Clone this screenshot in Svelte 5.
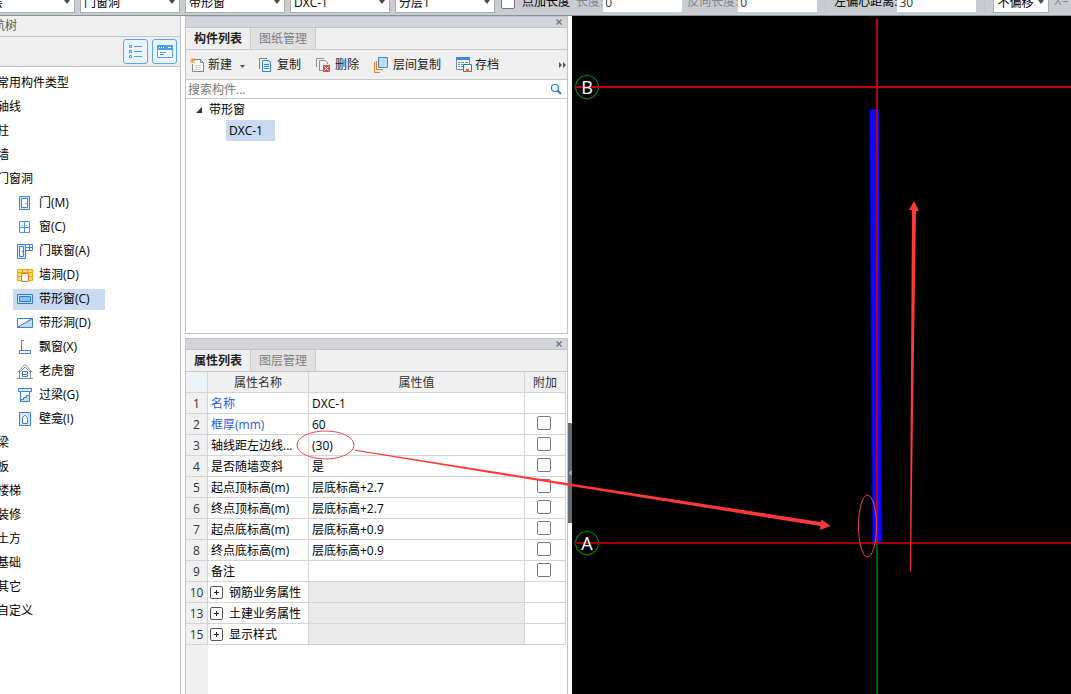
<script>
  const levels = [
    { value: '首层', name: '楼层' },
    { value: '门窗洞', name: '构件分类' },
    { value: '带形窗', name: '构件类型' },
    { value: 'DXC-1', name: '构件' },
    { value: '分层1', name: '分层' }
  ];

  const before = ['常用构件类型', '轴线', '柱', '墙', '门窗洞'];
  const after = ['梁', '板', '楼梯', '装修', '土方', '基础', '其它', '自定义'];
  const children = [
    { icon: 'door', label: '门(M)' },
    { icon: 'window', label: '窗(C)' },
    { icon: 'doorwindow', label: '门联窗(A)' },
    { icon: 'hole', label: '墙洞(D)' },
    { icon: 'strip', label: '带形窗(C)' },
    { icon: 'striphole', label: '带形洞(D)' },
    { icon: 'bay', label: '飘窗(X)' },
    { icon: 'dormer', label: '老虎窗' },
    { icon: 'lintel', label: '过梁(G)' },
    { icon: 'niche', label: '壁龛(I)' }
  ];
  let selected = $state('strip');

  const rows = [
    { n: 1, name: '名称', value: 'DXC-1', blue: true, noCheck: true },
    { n: 2, name: '框厚(mm)', value: '60', blue: true },
    { n: 3, name: '轴线距左边线...', value: '(30)' },
    { n: 4, name: '是否随墙变斜', value: '是' },
    { n: 5, name: '起点顶标高(m)', value: '层底标高+2.7' },
    { n: 6, name: '终点顶标高(m)', value: '层底标高+2.7' },
    { n: 7, name: '起点底标高(m)', value: '层底标高+0.9' },
    { n: 8, name: '终点底标高(m)', value: '层底标高+0.9' },
    { n: 9, name: '备注', value: '' },
    { n: 10, name: '钢筋业务属性', group: true },
    { n: 13, name: '土建业务属性', group: true },
    { n: 15, name: '显示样式', group: true }
  ];
</script>

{#snippet combo(value, name, narrow)}
  <span class="combo" class:narrow>
    <select aria-label={name}><option>{value}</option></select>
    <svg width="6" height="4" viewBox="0 0 6 4" aria-hidden="true"><path d="M0 0h6L3 4z" fill="#4a4a4a" /></svg>
  </span>
{/snippet}

{#snippet treeIcon(kind)}
  <svg class="icon" width="16" height="15" viewBox="0 1 16 15" fill="none" stroke="#3c82d4" aria-hidden="true">
    {#if kind === 'door'}
      <path d="M2.5 1.5h10v13h-10z" fill="#d9e8f8" /><path d="M4.500 3.500h6v9h-6z" fill="#fff" /><path d="M9 8v1" />
    {:else if kind === 'window'}
      <path d="M2.500 2.500h10v11h-10zM7.500 2.500v11M2.500 8.500h10M5.500 6v1M9.500 6v1" stroke="#4c92dc" fill="#f5faff" />
    {:else if kind === 'doorwindow'}
      <path d="M.5 1.500h8v14h-8z" fill="#d9e8f8" /><path d="M2.500 3.500h4v10h-4z" fill="#eaf3fc" /><path d="M8.500 1.500h7v6h-7zM12.500 1.500v6M8.500 4.500h7M5.500 8v1" />
    {:else if kind === 'hole'}
      <path d="M.5 2.500h15v11H.5z" fill="#ffd96b" stroke="#f5a800" /><path d="M0 5.500h16M0 9.500h4M12 9.500h4M5.500 2v3M10.500 2v3" stroke="#f5a800" /><path d="M4.500 6.500h7v8h-7z" fill="#fff" stroke="#e87424" />
    {:else if kind === 'strip'}
      <path d="M.5 3.500h15v9H.5z" fill="#c3ddf5" stroke="#2d7fd0" /><path d="M2.500 5.500h11v5h-11z" fill="#91bfea" stroke="#2d7fd0" />
    {:else if kind === 'striphole'}
      <path d="M.5 12.500v-9h15z" fill="#fff" /><path d="M.5 12.500l15-9v9z" fill="#c5dcf3" />
    {:else if kind === 'bay'}
      <path d="M7 1.500H4.500v9M2.500 11.500h11v3h-11z" /><path d="M4.500 10v1" />
    {:else if kind === 'dormer'}
      <path d="M.5 9.500L8 1.500l7.500 8M2.500 8v7.500M13.500 8v7.500M0 15.500h16M3 9l5-5 5 5" stroke="#838d95" /><path d="M5.500 8.500h5v5h-5zM5.500 11.500h5" />
    {:else if kind === 'lintel'}
      <path d="M1.500 1.500h13v3h-13z" fill="#d9e8f8" /><path d="M3.500 4.500h9v10h-9z" fill="#fff" /><path d="M3.500 14.500v-2h3v-2h3v-2h3v6z" fill="#c5dcf3" />
    {:else}
      <path d="M2.500 1.500h11v13h-11z" fill="#d9e8f8" /><path d="M5.500 12.500v-6l2-2h1l2 2v6z" fill="#fff" />
    {/if}
  </svg>
{/snippet}

{#snippet closeButton()}
  <button class="close" aria-label="关闭">
    <svg width="6" height="6" viewBox="0 0 6 6" aria-hidden="true"><path d="M.5.5l5 5M5.500.5l-5 5" stroke="#6d7077" stroke-width="1.200" /></svg>
  </button>
{/snippet}

<div class="app">
  <header class="optionbar">
    {#each levels as l}
      {@render combo(l.value, l.name, false)}
    {/each}
    <label class="tick"><input type="checkbox" />点加长度</label>
    <label class="field dim">长度:<input type="text" value="0" /></label>
    <label class="field dim">反向长度:<input type="text" value="0" /></label>
    <span class="rule"></span>
    <label class="field">左偏心距离:<input type="text" value="30" /></label>
    <span class="rule"></span>
    {@render combo('不偏移', '偏移方式', true)}
    <span class="coord">X=</span>
  </header>

  <main class="work">
    <aside class="nav">
      <h2>导航树</h2>
      <div class="views">
        <button aria-label="列表视图">
          <svg width="14" height="14" viewBox="0 0 14 14" fill="none" stroke="#4a9ff0" aria-hidden="true"><path d="M.5.5h2v2h-2zM.5 5.500h2v2h-2zM.5 10.500h2v2h-2zM5 1.500h8M5 6.500h8M5 11.500h8" /></svg>
        </button>
        <button aria-label="面板视图">
          <svg width="16" height="14" viewBox="0 0 16 14" aria-hidden="true"><path d="M.5.5h15v12H.5z" fill="#fff" stroke="#4a9ff0" /><path d="M0 0h16v5H0z" fill="#4a9ff0" /><path d="M3 7.500h6M3 9.500h4" stroke="#4a9ff0" /><path d="M2 2.500h1M4 2.500h1M6 2.500h1M11 2.500h3" stroke="#fff" /></svg>
        </button>
      </div>
      <ul>
        {#each before as t}<li>{t}</li>{/each}
        {#each children as c}
          <li class="child">
            <button class:selected={selected === c.icon} onclick={() => (selected = c.icon)}>
              {@render treeIcon(c.icon)}{c.label}
            </button>
          </li>
        {/each}
        {#each after as t}<li>{t}</li>{/each}
      </ul>
    </aside>

    <div class="docks">
      <section class="panel">
        <div class="grip">{@render closeButton()}</div>
        <div class="tabs"><button class="active">构件列表</button><button>图纸管理</button></div>
        <div class="tools">
          <button>
            <svg width="16" height="16" viewBox="0 0 16 16" fill="none" aria-hidden="true"><path d="M4.500 2.500h7l3 3v9h-11V7" fill="#f6f6f6" stroke="#7d8992" /><path d="M11.500 2.500v3h3" stroke="#7d8992" /><path d="M5 8.500h7M5 10.500h7M5 12.500h7" stroke="#d3d7da" /><path d="M1 1l5 5M6 1L1 6M3.500 1v5M1 3.500h5" stroke="#f29a2e" stroke-width=".8" /></svg>
            新建
            <svg class="more" width="8" height="16" viewBox="0 0 8 16" aria-hidden="true"><path d="M5 8h5l-2.500 3z" fill="#555" /></svg>
          </button>
          <button>
            <svg width="16" height="16" viewBox="0 0 16 16" fill="none" stroke="#3b82d1" aria-hidden="true"><path d="M1.500 12V1.500H9" stroke="#74838f" /><path d="M4.500 3.500h6l2 2v9h-8z" fill="#e5f0fb" /><path d="M6 7.500h5M6 9.500h5M6 11.500h5" /></svg>
            复制
          </button>
          <button>
            <svg width="16" height="16" viewBox="0 0 16 16" fill="none" stroke="#87949c" aria-hidden="true"><path d="M.5 10V1.500H8M3.500 13v-9.500h6l2 2V7M3 13.500h4" /><path d="M7 8h7v7H7z" fill="#d65052" stroke="none" /><path d="M8.500 9.500l4 4M12.500 9.500l-4 4" stroke="#fff" /></svg>
            删除
          </button>
          <button>
            <svg width="16" height="16" viewBox="0 0 16 16" fill="none" aria-hidden="true"><path d="M.5 5v10.500H6M2.500 4v8.500H9" stroke="#ee7a22" /><path d="M4.500.5h9v10h-9z" fill="#bcdcfb" stroke="#4388d8" /></svg>
            层间复制
          </button>
          <button>
            <svg width="16" height="16" viewBox="0 0 16 16" fill="none" aria-hidden="true"><path d="M.5 1.500h13v11H.5z" fill="#f3f8fd" stroke="#7d8992" /><path d="M0 0h14v3H0z" fill="#4388d8" /><path d="M2 5.500h2M5 5.500h3M9 5.500h3M2 7.500h2M5 7.500h2M2 9.500h2M5 9.500h2" stroke="#4388d8" /><path d="M7.500 7.500h8v7h-8z" fill="#e5f0fb" stroke="#3278c8" /><path d="M9 8h5v2H9z" fill="#fff" /><path d="M10 12h3v3h-3z" fill="#e86a1c" /></svg>
            存档
          </button>
          <button class="overflow" aria-label="更多">
            <svg width="8" height="6" viewBox="0 0 8 6" aria-hidden="true"><path d="M0 0l3 3-3 3zM4 0l3 3-3 3z" fill="#555" /></svg>
          </button>
        </div>
        <div class="search">
          <input type="text" placeholder="搜索构件..." aria-label="搜索构件" />
          <svg width="12" height="12" viewBox="0 0 12 12" fill="none" stroke="#1b84b8" aria-hidden="true"><circle cx="5" cy="5" r="3.500" stroke-width="1.200" /><path d="M7.500 7.500l3.500 3.500" stroke-width="2" /></svg>
        </div>
        <ul class="parts">
          <li>
            <svg width="6" height="6" viewBox="0 0 6 6" aria-hidden="true"><path d="M6 0v6H0z" fill="#333" /></svg>带形窗
          </li>
          <li class="leaf"><span>DXC-1</span></li>
        </ul>
      </section>

      <section class="panel props">
        <div class="grip">{@render closeButton()}</div>
        <div class="tabs"><button class="active">属性列表</button><button>图层管理</button></div>
        <table>
          <colgroup><col class="c-num" /><col class="c-name" /><col /><col class="c-add" /></colgroup>
          <thead>
            <tr><th class="corner"></th><th>属性名称</th><th>属性值</th><th>附加</th></tr>
          </thead>
          <tbody>
            {#each rows as r}
              <tr class:group={r.group}>
                <th scope="row">{r.n}</th>
                <td class="name" class:blue={r.blue}>
                  {#if r.group}
                    <button class="expand" aria-label="展开{r.name}">
                      <svg width="13" height="13" viewBox="0 0 13 13" fill="none" aria-hidden="true"><rect x=".5" y=".5" width="12" height="12" rx="1.500" stroke="#555" /><path d="M4 6.500h5M6.500 4v5" stroke="#222" /></svg>
                    </button>
                  {/if}{r.name}
                </td>
                <td class="val">{r.value ?? ''}</td>
                <td class="add">
                  {#if !r.group && !r.noCheck}<input type="checkbox" aria-label="附加{r.name}" />{/if}
                </td>
              </tr>
            {/each}
          </tbody>
        </table>
        <div class="filler"></div>
      </section>
    </div>

    <div class="splitter">
      <button aria-label="收起面板">
        <svg width="4" height="6" viewBox="0 0 4 6" aria-hidden="true"><path d="M3.500 0v6L.5 3z" fill="#aab2ba" /></svg>
      </button>
    </div>

    <div class="drawing">
      <svg width="100%" height="100%" role="img" aria-label="平面图">
        <g fill="none" stroke="#008000" stroke-width="1.200">
          <path d="M15 59l6 2 4 4 2 6-2 6-4 4-6 2-6-2-4-4-2-6 2-6 4-4z" />
          <path d="M15 515l6 2 4 4 2 6-2 6-4 4-6 2-6-2-4-4-2-6 2-6 4-4z" />
        </g>
        <rect x="3" y="70" width="100%" height="2" fill="#c40000" />
        <path d="M297.500 93.500h9.500l3 434h-9.500z" fill="#0a0aff" stroke="#000090" stroke-width="1" />
        <rect x="3" y="526" width="100%" height="2" fill="#a00000" />
        <rect x="304" y="3" width="2" height="524" fill="#bc0014" />
        <rect x="304" y="528" width="2" height="100%" fill="#006000" />
        <g fill="#fff" font-size="18" text-anchor="middle">
          <text x="15" y="78">B</text>
          <text x="15" y="534">A</text>
        </g>
      </svg>
    </div>
  </main>

  <svg class="marks" width="1071" height="694" aria-hidden="true">
    <g fill="none" stroke="#f54242">
      <ellipse cx="325.500" cy="445" rx="28.500" ry="14" />
      <ellipse cx="867.500" cy="526" rx="9" ry="31" />
    </g>
    <g fill="#ff3838">
      <path d="M355 449.800L570 483.500L820.500 522L821.500 519.500L830.500 526L820 530L820.500 526L570 486L355 450.800z" />
      <path d="M910 571.500L910.500 450L912 210H909L914 201L919 211H916L912.500 450L911 571.500z" />
    </g>
  </svg>
</div>

<style>
  :global(body) {
    margin: 0;
    background: #fff;
  }
  .app, .app :is(button, input, select) {
    font-family: 'Open Sans', 'Noto Sans CJK SC', sans-serif;
    font-size: 12px;
    color: #000;
  }
  .app {
    position: relative;
    display: flex;
    flex-direction: column;
    height: 100vh;
    overflow: hidden;
    line-height: 20px;
  }
  .app *, .app {
    box-sizing: border-box;
  }
  button {
    border: 0;
    padding: 0;
    background: none;
    line-height: 20px;
    white-space: nowrap;
  }
  svg {
    flex: none;
    display: block;
  }
  ul {
    list-style: none;
    margin: 0;
    padding: 0;
  }

  .optionbar {
    flex: none;
    display: flex;
    align-items: flex-end;
    gap: 5px;
    height: 16px;
    margin-left: -25px;
    padding-bottom: 2px;
    overflow: hidden;
    white-space: nowrap;
    background: #c9ccd1;
    border-bottom: 1px solid #8b9296;
  }
  .combo {
    flex: none;
    display: grid;
    align-items: center;
    width: 100px;
  }
  .combo > * {
    grid-area: 1 / 1;
  }
  .combo > svg {
    justify-self: end;
    margin-right: 5px;
    pointer-events: none;
  }
  .combo.narrow {
    width: 56px;
  }
  select {
    appearance: none;
    width: 100%;
    height: 22px;
    padding: 0 3px;
    border: 1px solid #a9adb2;
    border-radius: 0;
    background: #fff;
  }
  .tick, .field {
    flex: none;
    display: flex;
    align-items: center;
    height: 22px;
  }
  .tick {
    gap: 7px;
    padding: 0 1px;
  }
  input[type='checkbox'] {
    appearance: none;
    flex: none;
    width: 14px;
    height: 14px;
    margin: 0;
    border: 1px solid #777;
    border-radius: 2px;
    background: #fff;
  }
  input[type='checkbox']:checked {
    background: #4a9ff0;
  }
  .field input {
    width: 79px;
    height: 20px;
    border: 0;
    padding: 0 2px;
    background: #fff;
    color: #333;
  }
  .dim, .coord {
    color: #85888c;
  }
  .coord {
    height: 22px;
  }
  .rule {
    flex: none;
    width: 1px;
    height: 20px;
    margin: 0 3px;
    background: #c0c3c8;
  }

  .work {
    flex: 1;
    display: flex;
    min-height: 0;
  }
  .nav {
    flex: none;
    width: 205px;
    margin-left: -24px;
    border-right: 1px solid #c0c2c9;
  }
  h2 {
    margin: 0;
    padding-left: 5px;
    height: 21px;
    font-size: 12px;
    font-weight: 400;
    color: #555;
    background: #efefef;
    border-bottom: 1px solid #c4c5cb;
  }
  .views {
    display: flex;
    justify-content: flex-end;
    align-items: center;
    gap: 4px;
    height: 30px;
    padding-right: 3px;
    background: #efefef;
    border-bottom: 1px solid #c4c5cb;
  }
  .views button {
    display: grid;
    place-items: center;
    width: 25px;
    height: 25px;
    border: 1px solid #5aa8f5;
    border-radius: 3px;
    background: #eaf4ff;
  }
  .nav ul {
    padding: 4px 0 0 21px;
  }
  .nav li {
    height: 24px;
    line-height: 24px;
    white-space: nowrap;
  }
  .nav .child {
    display: flex;
    align-items: center;
    padding-left: 16px;
  }
  .child button {
    display: flex;
    align-items: center;
    gap: 6px;
    height: 21px;
    padding: 0 15px 0 4px;
  }
  .child .selected, .leaf span {
    background: #c9daf1;
  }

  .docks {
    flex: none;
    width: 383px;
    margin-left: 4px;
    display: grid;
    grid-template-rows: minmax(0, 318fr) minmax(0, 356fr);
    gap: 4px;
  }
  .panel {
    display: flex;
    flex-direction: column;
    border: 1px solid #c1c3ca;
    overflow: hidden;
  }
  .props {
    border-bottom: 0;
  }
  .grip {
    flex: none;
    display: flex;
    justify-content: flex-end;
    height: 11px;
    background: #d3d5db;
    border-bottom: 1px solid #c1c3ca;
  }
  .close {
    display: grid;
    place-items: center;
    width: 16px;
    height: 10px;
  }
  .tabs {
    flex: none;
    display: flex;
    height: 22px;
    background: #efefef;
    border-bottom: 1px solid #c8c9ce;
  }
  .tabs button {
    width: 65px;
    background: #e1e1e1;
    border-right: 1px solid #c8c9ce;
    color: #808080;
  }
  .tabs .active {
    background: #efefef;
    color: #222;
    font-weight: 700;
  }
  .tools {
    flex: none;
    display: flex;
    align-items: center;
    gap: 15px;
    height: 30px;
    padding-left: 3px;
    background: #efefef;
    border-bottom: 1px solid #c8c9ce;
  }
  .tools button {
    display: flex;
    align-items: center;
    gap: 3px;
    color: #222;
  }
  .more {
    overflow: visible;
  }
  .tools .overflow {
    margin-left: auto;
  }
  .search {
    flex: none;
    display: flex;
    align-items: center;
    height: 19px;
    padding-right: 5px;
    border-bottom: 1px solid #c8c9ce;
  }
  .search input {
    flex: 1;
    min-width: 0;
    height: 18px;
    padding: 0 2px;
    border: 0;
    outline: 0;
  }
  .search input::placeholder {
    color: #777;
  }
  .parts li {
    display: flex;
    align-items: center;
    gap: 7px;
    height: 21px;
    padding-left: 10px;
  }
  .parts .leaf {
    padding-left: 40px;
  }
  .leaf span {
    width: 49px;
    padding-left: 3px;
    line-height: 21px;
  }

  table {
    flex: none;
    width: calc(100% - 1px);
    table-layout: fixed;
    border-collapse: separate;
    border-spacing: 0;
  }
  .c-num { width: 22px; }
  .c-name { width: 101px; }
  .c-add { width: 41px; }
  th, td {
    height: 21px;
    padding: 2px 0 0;
    line-height: 18px;
    border-right: 1px solid #d4d4d4;
    border-bottom: 1px solid #d4d4d4;
    white-space: nowrap;
    overflow: hidden;
  }
  td {
    padding-left: 3px;
  }
  .group .name {
    padding-left: 2px;
  }
  th {
    background: #f0f0f0;
    font-weight: 400;
    color: #333;
    text-align: center;
  }
  .corner {
    background: #edf1f8;
  }
  .blue {
    color: #1f5ae0;
  }
  .group .val {
    background: #eaeaea;
  }
  .add {
    padding-top: 0;
  }
  .add input {
    display: block;
    margin: 0 0 2px 9px;
  }
  .expand {
    display: inline-block;
    vertical-align: middle;
    height: 13px;
    margin: 0 6px 3px 0;
    line-height: 13px;
  }
  .filler {
    flex: 1;
    width: 22px;
    background: #f0f0f0;
  }

  .splitter {
    flex: none;
    display: flex;
    align-items: center;
    width: 4px;
    background: #fff;
  }
  .splitter button {
    display: grid;
    place-items: center;
    width: 4px;
    height: 100px;
    margin-top: 236px;
    background: #5f6a76;
  }
  .drawing {
    flex: 1;
    min-width: 0;
    background: #000;
    overflow: hidden;
  }
  .marks {
    position: absolute;
    top: 0;
    left: 0;
    pointer-events: none;
  }
</style>
